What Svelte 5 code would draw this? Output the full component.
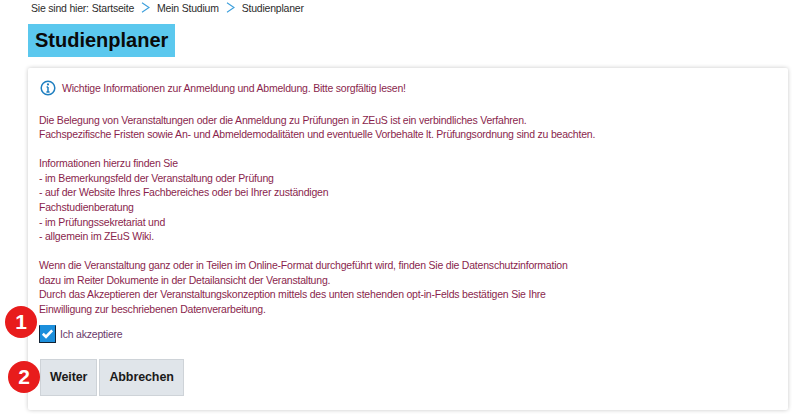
<script>
  const body = [
    ['Die Belegung von Veranstaltungen oder die Anmeldung zu Prüfungen in ZEuS ist ein verbindliches Verfahren.', 'Fachspezifische Fristen sowie An- und Abmeldemodalitäten und eventuelle Vorbehalte lt. Prüfungsordnung sind zu beachten.'],
    ['Informationen hierzu finden Sie', '- im Bemerkungsfeld der Veranstaltung oder Prüfung', '- auf der Website Ihres Fachbereiches oder bei Ihrer zuständigen', 'Fachstudienberatung', '- im Prüfungssekretariat und', '- allgemein im ZEuS Wiki.'],
    ['Wenn die Veranstaltung ganz oder in Teilen im Online-Format durchgeführt wird, finden Sie die Datenschutzinformation', 'dazu im Reiter Dokumente in der Detailansicht der Veranstaltung.', 'Durch das Akzeptieren der Veranstaltungskonzeption mittels des unten stehenden opt-in-Felds bestätigen Sie Ihre', 'Einwilligung zur beschriebenen Datenverarbeitung.']
  ];
</script>

<div class="page">
  <nav class="crumbs">
    <span class="here">Sie sind hier:</span>
    <span>Startseite</span>
    <svg class="chev" viewBox="0 0 9 11"><path d="M1 .8l7 4.7-7 4.7" /></svg>
    <span>Mein Studium</span>
    <svg class="chev" viewBox="0 0 9 11"><path d="M1 .8l7 4.7-7 4.7" /></svg>
    <span>Studienplaner</span>
  </nav>

  <h1>Studienplaner</h1>

  <section class="card">
    <div class="head">
      <svg class="info" viewBox="0 0 16 16">
        <circle cx="8" cy="8" r="6.8" />
        <path d="M8 7v5M6.4 12h3.2M6.6 7H8" />
        <circle class="dot" cx="8" cy="4.4" r="1.1" />
      </svg>
      <span>Wichtige Informationen zur Anmeldung und Abmeldung. Bitte sorgfältig lesen!</span>
    </div>

    {#each body as para}
      <p>
        {#each para as line}
          <span class="line">{line}</span>
        {/each}
      </p>
    {/each}

    <div class="accept">
      <span class="marker one">1</span>
      <span class="box">
        <svg viewBox="0 0 16 16"><path d="M3 8.3l3.4 3.2L13 4.6" /></svg>
      </span>
      <span>Ich akzeptiere</span>
    </div>

    <div class="actions">
      <span class="marker two">2</span>
      <button>Weiter</button>
      <button>Abbrechen</button>
    </div>
  </section>
</div>

<style>
  :global(body) {
    margin: 0;
    background: #fff;
  }
  .page {
    width: 800px;
    height: 417px;
    overflow: hidden;
    box-sizing: border-box;
    padding: 0 12px 0 28px;
    font-family: "Liberation Sans", Arial, sans-serif;
    font-size: 10.5px;
    letter-spacing: -0.21px;
    color: #8a1f4d;
  }
  .crumbs {
    display: flex;
    align-items: center;
    gap: 7px;
    height: 15px;
    padding-left: 3px;
    color: #2c2c2c;
  }
  .here {
    margin-right: -4px;
  }
  .chev {
    width: 9px;
    height: 11px;
    fill: none;
    stroke: #3c9fdc;
    stroke-width: 1.1;
  }
  h1 {
    display: inline-block;
    margin: 9px 0 0;
    padding: 0 7px;
    height: 33px;
    line-height: 33px;
    background: #5bc8ee;
    color: #0a0a0a;
    font-size: 20px;
    font-weight: 700;
    letter-spacing: 0;
  }
  .card {
    box-sizing: border-box;
    width: 760px;
    height: 342px;
    margin-top: 11px;
    padding: 12px 11px;
    background: #fff;
    border-radius: 2px;
    box-shadow: 0 0 4px rgba(0, 0, 0, 0.22);
  }
  .head {
    display: flex;
    align-items: center;
    gap: 6px;
    height: 16px;
    margin-bottom: 16.7px;
    padding-left: 1px;
  }
  .info {
    width: 16px;
    height: 16px;
    fill: none;
    stroke: #1f7fc0;
    stroke-width: 1.5;
  }
  .info .dot {
    fill: #1f7fc0;
    stroke: none;
  }
  p {
    margin: 14.4px 0 0;
    line-height: 14.6px;
  }
  .head + p {
    margin-top: 0;
  }
  .line {
    display: block;
    white-space: nowrap;
  }
  .accept {
    position: relative;
    display: flex;
    align-items: center;
    gap: 4px;
    margin-top: 8.3px;
    height: 18px;
    color: #6a3a6a;
  }
  .box {
    display: flex;
    align-items: center;
    justify-content: center;
    width: 17px;
    height: 18px;
    background: #1c8fdc;
    border: 1px solid #123;
    border-top-color: #1c8fdc;
    box-sizing: border-box;
  }
  .box svg {
    width: 15px;
    height: 15px;
    fill: none;
    stroke: #fff;
    stroke-width: 2.8;
  }
  .marker {
    position: absolute;
    display: flex;
    align-items: center;
    justify-content: center;
    width: 32px;
    height: 32px;
    border-radius: 50%;
    background: #e81c1c;
    color: #fff;
    font-size: 21px;
    font-weight: 700;
    letter-spacing: 0;
  }
  .marker.one {
    left: -34px;
    top: -19px;
  }
  .marker.two {
    left: -32px;
    top: 2px;
  }
  .actions {
    position: relative;
    display: flex;
    gap: 2px;
    margin: 16px 0 0 1px;
  }
  button {
    height: 37px;
    padding: 0 9px;
    background: #e0e5ea;
    border: 1px solid #ced3d8;
    color: #1a1a1a;
    font-family: inherit;
    font-size: 12.5px;
    font-weight: 700;
    letter-spacing: -0.1px;
  }
</style>
